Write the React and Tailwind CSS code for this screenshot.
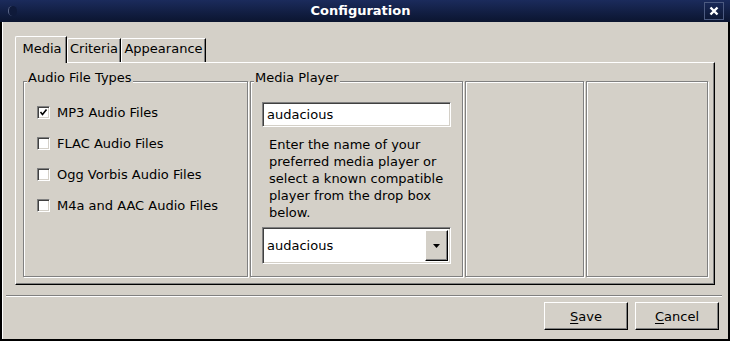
import React from 'react';

const raised =
  'border border-t-white border-l-white border-r-black border-b-black shadow-[inset_-1px_-1px_0_#808080]';
const sunken =
  'border border-t-[#808080] border-l-[#808080] border-r-white border-b-white shadow-[inset_1px_1px_0_#404040,inset_-1px_-1px_0_#d4d0c8]';
const etched = 'relative border border-[#808080] shadow-[inset_1px_1px_0_#fff,1px_1px_0_#fff]';

const fileTypes = [
  { label: 'MP3 Audio Files', checked: true },
  { label: 'FLAC Audio Files', checked: false },
  { label: 'Ogg Vorbis Audio Files', checked: false },
  { label: 'M4a and AAC Audio Files', checked: false },
];

function GroupBox({ title, className = '', children }) {
  return (
    <div className={`${etched} ${className}`}>
      {title && (
        <span className="absolute left-[3px] top-[-12px] px-px leading-[15px] bg-[#d4d0c8] whitespace-nowrap">
          {title}
        </span>
      )}
      {children}
    </div>
  );
}

function Checkbox({ checked, label }) {
  return (
    <div className="flex items-center h-[13px] gap-[7px]">
      <div className={`w-[13px] h-[13px] bg-white ${sunken} flex items-center justify-center`}>
        {checked && (
          <svg width="9" height="9" viewBox="0 0 9 9">
            <path d="M1.5 4 L3.5 6.5 L7.5 1.5" stroke="#000" strokeWidth="1.6" fill="none" />
          </svg>
        )}
      </div>
      <span className="leading-[13px] whitespace-nowrap">{label}</span>
    </div>
  );
}

function Tab({ label, selected, width }) {
  if (selected) {
    return (
      <div
        className={`${width} relative z-10 -mb-px h-[27px] bg-[#d4d0c8] border-t border-l border-r border-t-white border-l-white border-r-black shadow-[inset_-1px_0_0_#808080] rounded-tl-[2px] flex justify-center pt-[4px] pl-[2px]`}
      >
        <span className="leading-[15px]">{label}</span>
      </div>
    );
  }
  return (
    <div
      className={`${width} h-[24px] border-t border-l border-r border-t-white border-l-white border-r-black shadow-[inset_-1px_0_0_#808080] rounded-tl-[2px] flex justify-center pt-[2px]`}
    >
      <span className="leading-[15px]">{label}</span>
    </div>
  );
}

export default function App() {
  return (
    <div className="w-[730px] h-[341px] bg-[#d4d0c8] flex flex-col font-['DejaVu_Sans',sans-serif] text-[13px] text-black overflow-hidden">
      {/* title bar */}
      <div className="h-[22px] shrink-0 bg-gradient-to-b from-[#1b2b5c] to-[#0b1530] flex items-center relative">
        <div className="ml-[8px] w-[9px] h-[10px] rounded-full border-l border-[#5a6688] bg-[#0f1a3a]" />
        <div className="flex-1 text-center text-white font-bold leading-[22px]">Configuration</div>
        <div className="mr-[6px] w-[20px] h-[18px] border border-[#4c5a80] flex items-center justify-center">
          <svg width="10" height="10" viewBox="0 0 10 10">
            <path d="M1.5 1.5 L8.5 8.5 M8.5 1.5 L1.5 8.5" stroke="#fff" strokeWidth="2.4" />
          </svg>
        </div>
      </div>

      {/* window body */}
      <div className="flex-1 flex flex-col border-l-2 border-r-2 border-b-2 border-black shadow-[inset_1px_0_0_#fff]">
        <div className="pl-[13px] pr-[13px] pt-[14px]">
          <div className="flex items-end h-[26px]">
            <Tab label="Media" selected width="w-[52px]" />
            <Tab label="Criteria" width="w-[54px]" />
            <Tab label="Appearance" width="w-[85px]" />
          </div>

          {/* tab panel */}
          <div className={`${raised} h-[223px] pt-[18px] pl-[7px] pr-[6px] flex gap-[2px]`}>
            <GroupBox title="Audio File Types" className="w-[225px] h-[196px] pt-[24px] pl-[13px]">
              <div className="flex flex-col gap-[18px]">
                {fileTypes.map((f) => (
                  <Checkbox key={f.label} label={f.label} checked={f.checked} />
                ))}
              </div>
            </GroupBox>

            <GroupBox title="Media Player" className="w-[213px] h-[196px] pt-[20px] pl-[11px]">
              <div className={`w-[189px] h-[25px] bg-white ${sunken} flex items-center pl-[4px]`}>
                <span className="leading-[15px]">audacious</span>
              </div>
              <p className="mt-[9px] ml-[7px] w-[182px] leading-[17px]">
                Enter the name of your preferred media player or select a known compatible player from the
                drop box below.
              </p>
              <div className={`mt-[6px] w-[189px] h-[37px] bg-white ${sunken} flex items-stretch p-[2px]`}>
                <span className="flex-1 flex items-center pl-[2px] leading-[15px]">audacious</span>
                <div className={`w-[23px] bg-[#d4d0c8] ${raised} flex items-center justify-center`}>
                  <svg width="7" height="4" viewBox="0 0 7 4">
                    <path d="M0 0 H7 L3.5 4 Z" fill="#000" />
                  </svg>
                </div>
              </div>
            </GroupBox>

            <GroupBox className="w-[119px] h-[196px]" />
            <GroupBox className="flex-1 h-[196px]" />
          </div>
        </div>

        {/* separator */}
        <div className="mt-[10px] ml-[4px] mr-[6px] h-[2px] border-t border-[#808080] border-b border-b-white" />

        {/* buttons */}
        <div className="mt-[5px] flex justify-end gap-[7px] pr-[9px]">
          <button className={`w-[84px] h-[28px] bg-[#d4d0c8] ${raised} leading-[15px]`}>
            <span className="underline underline-offset-2">S</span>ave
          </button>
          <button className={`w-[84px] h-[28px] bg-[#d4d0c8] ${raised} leading-[15px]`}>
            <span className="underline underline-offset-2">C</span>ancel
          </button>
        </div>
      </div>
    </div>
  );
}
